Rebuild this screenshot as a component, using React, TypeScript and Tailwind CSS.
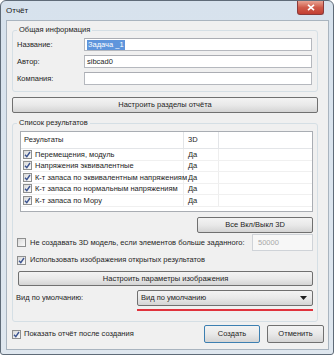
const font = "font-['Liberation_Sans',Arial,sans-serif]";

const Check = ({ checked = true }: { checked?: boolean }) => (
  <span className="w-[9px] h-[9px] shrink-0 border border-[#8e8f8f] bg-linear-to-br from-[#dadada] to-[#fbfbfb] flex items-center justify-center">
    {checked && (
      <svg width="7" height="7" viewBox="0 0 7 7">
        <path d="M1 3.7 L2.8 5.7 L6 1" stroke="#3d5590" strokeWidth="1.4" fill="none" />
      </svg>
    )}
  </span>
);

const Btn = ({ children, className = '' }: { children: React.ReactNode; className?: string }) => (
  <button className={`flex items-center justify-center border border-[#707070] rounded-[2px] bg-linear-to-b from-[#f3f3f3] via-[#e9e9e9] to-[#d4d4d4] text-[7.5px] text-[#1e1e1e] ${className}`}>
    {children}
  </button>
);

const results = [
  'Перемещения, модуль',
  'Напряжения эквивалентные',
  'К-т запаса по эквивалентным напряжениям',
  'К-т запаса по нормальным напряжениям',
  'К-т запаса по Мору',
];

const Field = ({ label, value, selected }: { label: string; value: string; selected?: boolean }) => (
  <div className="flex items-center h-[13px]">
    <span className="w-[71px] pl-[4px]">{label}</span>
    <div className="w-[228px] h-[13px] bg-white border border-[#b5b8be] border-t-[#abadb3] flex items-center pl-[2px]">
      {selected ? <span className="bg-[#5e95dc] text-white leading-[10px] px-[1px]">{value}</span> : <span>{value}</span>}
    </div>
  </div>
);

export default function App() {
  return (
    <div className={`${font} text-[7.5px] text-[#1e1e1e] w-[334px] h-[355px] bg-linear-to-b from-[#d7e2ed] to-[#dfe7ef] border border-[#5f6b78] rounded-t-[6px] rounded-b-[3px] flex flex-col overflow-hidden`}>
      <div className="h-[19px] flex justify-between pl-[5px] pr-[9px]">
        <span className="pt-[4px] text-[8px] text-[#1a1a1a]">Отчёт</span>
        <div className="w-[27px] h-[14px] rounded-b-[3px] border border-t-0 border-[#8a3a3a] bg-linear-to-b from-[#e8a393] via-[#cf5b4a] to-[#c23f33] flex items-center justify-center">
          <svg width="8" height="7" viewBox="0 0 8 7">
            <path d="M1 0.8 L7 6.2 M7 0.8 L1 6.2" stroke="white" strokeWidth="1.6" />
          </svg>
        </div>
      </div>

      <div className="ml-[5px] w-[323px] h-[330px] bg-[#f0f0f0] border border-[#a9b4bf] flex flex-col">
        {/* Общая информация */}
        <div className="ml-[5px] mt-[9px] w-[306px] h-[62px] border border-[#d5dfe5] rounded-[3px] flex flex-col">
          <span className="-mt-[7px] ml-[4px] self-start h-[12px] leading-[12px] px-[2px] bg-[#f0f0f0]">Общая информация</span>
          <div className="mt-[2px] flex flex-col gap-[4px]">
            <Field label="Название:" value="Задача _1" selected />
            <Field label="Автор:" value="sibcad0" />
            <Field label="Компания:" value="" />
          </div>
        </div>

        <Btn className="ml-[5px] mt-[5px] w-[306px] h-[16px]">Настроить разделы отчёта</Btn>

        {/* Список результатов */}
        <div className="ml-[5px] mt-[10px] w-[306px] h-[199px] border border-[#d5dfe5] rounded-[3px] flex flex-col">
          <span className="-mt-[7px] ml-[4px] self-start h-[12px] leading-[12px] px-[2px] bg-[#f0f0f0]">Список результатов</span>

          <div className="ml-[7px] mt-[2px] w-[293px] h-[81px] bg-white border border-[#a9adb3] flex flex-col">
            <div className="h-[17px] flex border-b border-[#e3e5e8] shrink-0">
              <div className="w-[163px] pl-[3px] flex items-center border-r border-[#e3e5e8]">Результаты</div>
              <div className="w-[35px] pl-[4px] flex items-center border-r border-[#e3e5e8]">3D</div>
            </div>
            {results.map((r) => (
              <div key={r} className="h-[11.5px] flex border-b border-[#f0f0f0]">
                <div className="w-[163px] pl-[2px] flex items-center gap-[3px] border-r border-[#eeeeee] whitespace-nowrap">
                  <Check />
                  <span>{r}</span>
                </div>
                <div className="w-[35px] pl-[4px] flex items-center border-r border-[#eeeeee]">Да</div>
              </div>
            ))}
          </div>

          <Btn className="self-end mr-[4px] mt-[5px] w-[116px] h-[16px]">Все Вкл/Выкл 3D</Btn>

          <div className="mt-[1px] flex items-center justify-between pl-[4px] pr-[4px]">
            <div className="flex items-center gap-[4px]">
              <Check checked={false} />
              <span>Не создавать 3D модель, если элементов больше заданного:</span>
            </div>
            <div className="w-[61px] h-[17px] border border-[#cfd3d8] bg-[#f7f7f7] flex items-center pl-[5px] text-[#a8a8a8]">50000</div>
          </div>

          <div className="mt-[3px] h-[12px] flex items-center gap-[4px] pl-[4px]">
            <Check />
            <span>Использовать изображения открытых результатов</span>
          </div>

          <Btn className="ml-[5px] mt-[5px] w-[295px] h-[15px]">Настроить параметры изображения</Btn>

          <div className="mt-[4px] flex items-center justify-between pl-[3px] pr-[4px]">
            <span>Вид по умолчанию:</span>
            <div className="w-[176px] h-[16px] border border-[#707070] rounded-[2px] bg-linear-to-b from-[#f3f3f3] via-[#e9e9e9] to-[#d4d4d4] flex items-center justify-between pl-[3px] pr-[5px]">
              <span>Вид по умолчанию</span>
              <svg width="7" height="4" viewBox="0 0 7 4">
                <path d="M0 0 H7 L3.5 4 Z" fill="#1e1e1e" />
              </svg>
            </div>
          </div>
          <div className="self-end mr-[4px] mt-[3px] w-[176px] h-[2px] bg-[#e0323c]" />
        </div>

        <div className="mt-[3px] flex items-center justify-between pl-[5px] pr-[4px]">
          <div className="flex items-center gap-[3px]">
            <Check />
            <span>Показать отчёт после создания</span>
          </div>
          <div className="flex gap-[7px]">
            <Btn className="w-[56px] h-[18px] !border-[#3c7fb1]">Создать</Btn>
            <Btn className="w-[57px] h-[18px]">Отменить</Btn>
          </div>
        </div>
      </div>
    </div>
  );
}
